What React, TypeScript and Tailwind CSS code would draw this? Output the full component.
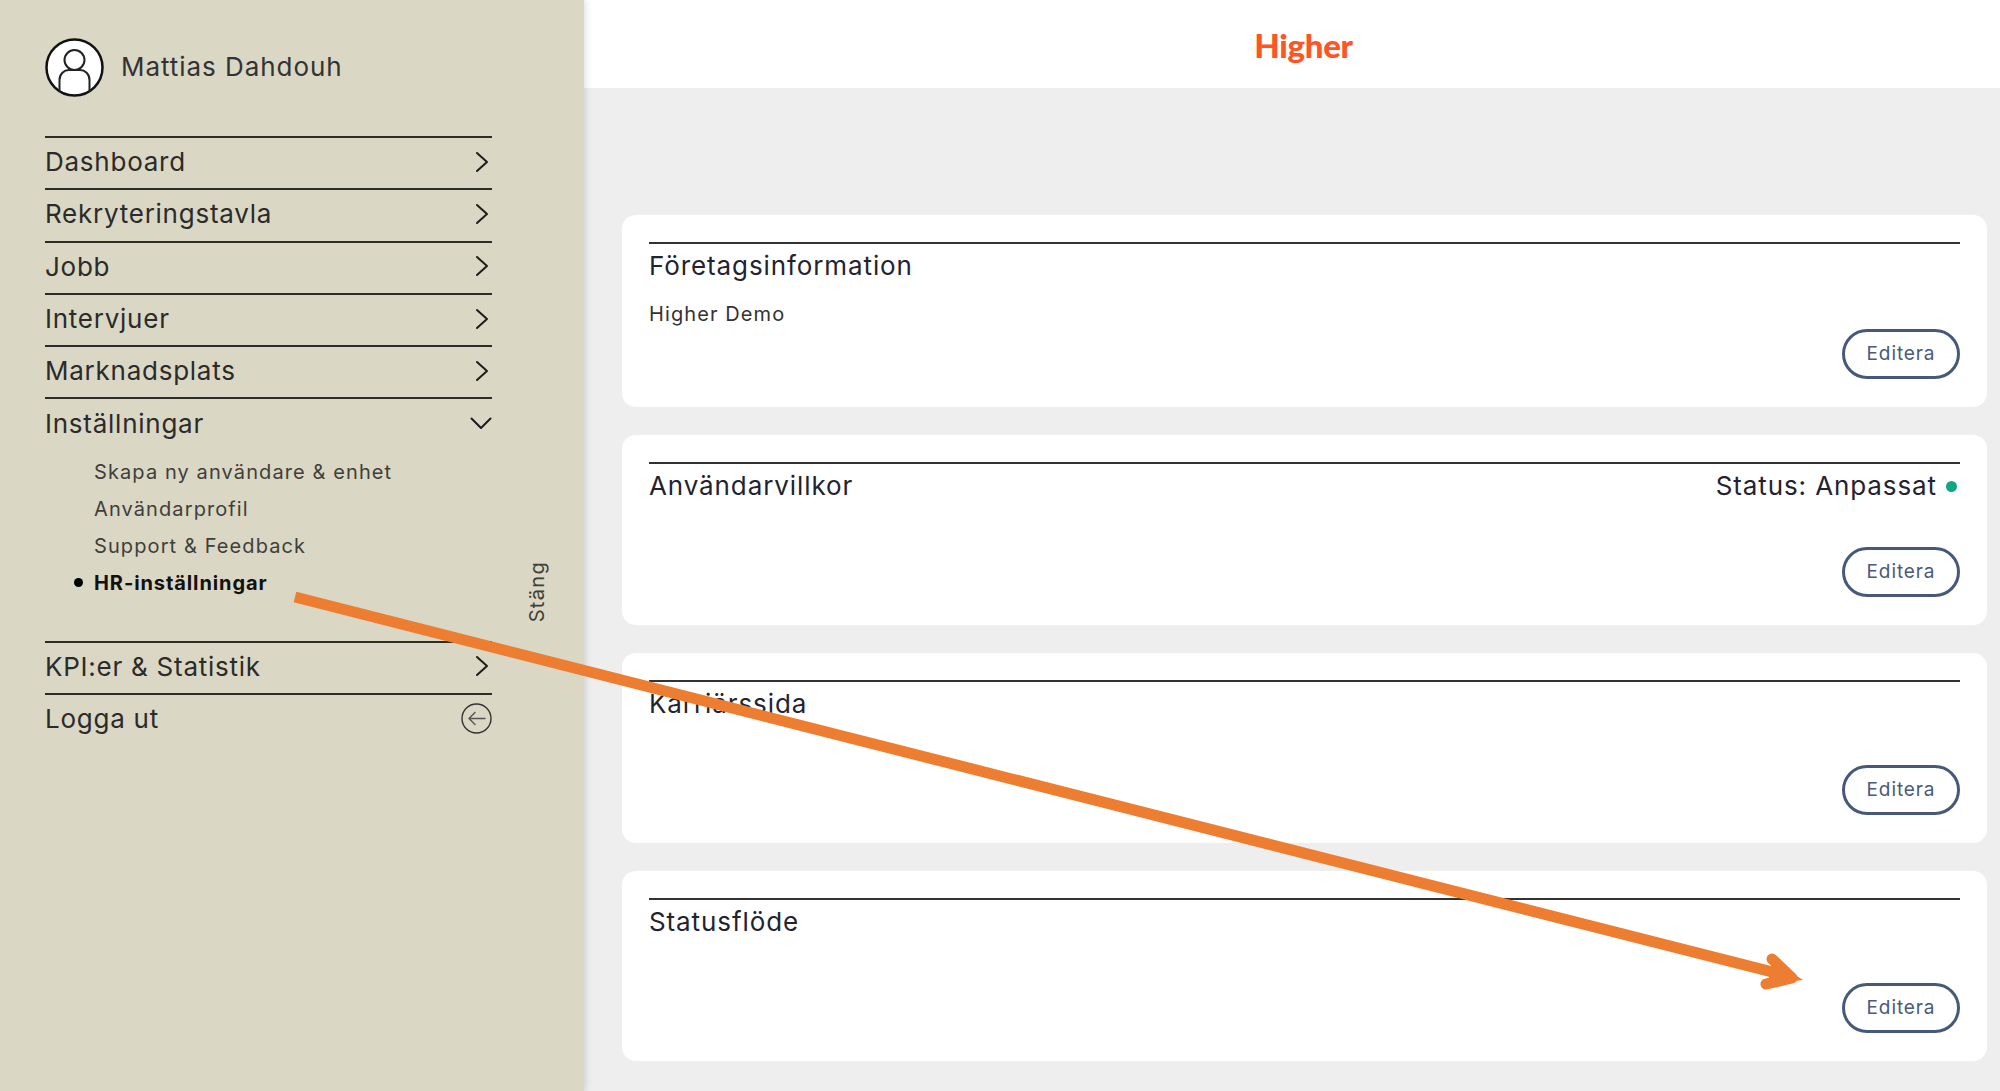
const menuTop = ['Dashboard', 'Rekryteringstavla', 'Jobb', 'Intervjuer', 'Marknadsplats'];
const subItems = ['Skapa ny användare & enhet', 'Användarprofil', 'Support & Feedback'];

function ChevronRight() {
  return (
    <svg width="14" height="22" viewBox="0 0 14 22" fill="none" className="mr-[3px]">
      <polyline points="2,2 12,11 2,20" stroke="#1c1c1c" strokeWidth="2" strokeLinecap="round" strokeLinejoin="round" />
    </svg>
  );
}

function ChevronDown() {
  return (
    <svg width="22" height="13" viewBox="0 0 22 13" fill="none">
      <polyline points="1.5,1.5 11,11 20.5,1.5" stroke="#1c1c1c" strokeWidth="2" strokeLinecap="round" strokeLinejoin="round" />
    </svg>
  );
}

function Avatar() {
  return (
    <svg width="59" height="59" viewBox="0 0 59 59" fill="none" className="shrink-0">
      <circle cx="29.5" cy="29.5" r="28" fill="#fff" stroke="#111" strokeWidth="2.5" />
      <circle cx="29.5" cy="22" r="10" stroke="#222" strokeWidth="2" />
      <path d="M14.5 54 V42 C14.5 36 19 32 24 32 H35 C40 32 44.5 36 44.5 42 V54" stroke="#222" strokeWidth="2" />
    </svg>
  );
}

function LogoutIcon() {
  return (
    <svg width="31" height="31" viewBox="0 0 31 31" fill="none">
      <circle cx="15.5" cy="15.5" r="14.5" stroke="#333" strokeWidth="1.4" />
      <path d="M24 15.5 H8 M14 9.5 L8 15.5 L14 21.5" stroke="#555" strokeWidth="1.4" strokeLinecap="round" strokeLinejoin="round" />
    </svg>
  );
}

function NavRow({ label, icon }: { label: string; icon: React.ReactNode }) {
  return (
    <div className="flex h-[52.3px] items-center justify-between border-t-2 border-[#2c2c28] pb-[3px] text-[26px] tracking-[0.75px] text-[#2b2b2b]">
      <span>{label}</span>
      {icon}
    </div>
  );
}

function Card({ title, children, right }: { title: string; children?: React.ReactNode; right?: React.ReactNode }) {
  return (
    <section className="flex h-[190px] flex-col rounded-[14px] bg-white px-[27px] pt-[27px] pb-[28px] first:h-[192px]">
      <div className="flex items-center justify-between border-t-2 border-[#333] pt-[4px] text-[26px] leading-[36px] tracking-[0.9px] text-[#1f2430]">
        <h2>{title}</h2>
        {right}
      </div>
      {children}
      <button className="mt-auto self-end h-[50px] w-[118px] rounded-full border-[3px] border-[#47597a] text-[19px] tracking-[0.9px] text-[#4a5a78]">
        Editera
      </button>
    </section>
  );
}

export default function App() {
  return (
    <div className="relative flex h-[1091px] w-[2000px] overflow-hidden bg-[#eeeeee] font-['Inter','Noto_Sans',sans-serif]">
      <aside className="z-10 flex h-full w-[584px] shrink-0 bg-[#dad7c4] pl-[45px] shadow-[2px_0_6px_rgba(0,0,0,0.12)]">
        <div className="w-[447px]">
          <div className="flex h-[136px] items-start gap-[17px] pt-[38px]">
            <Avatar />
            <span className="mt-[11px] text-[26px] leading-[36px] tracking-[0.95px] text-[#333]">Mattias Dahdouh</span>
          </div>
          <nav>
            {menuTop.map((item) => (
              <NavRow key={item} label={item} icon={<ChevronRight />} />
            ))}
            <NavRow label="Inställningar" icon={<ChevronDown />} />
            <ul className="h-[191px] pt-[4px] pl-[49px] text-[20px] tracking-[1.1px] text-[#3f3f3a]">
              {subItems.map((item) => (
                <li key={item} className="flex h-[36.8px] items-center">{item}</li>
              ))}
              <li className="relative flex h-[36.8px] items-center font-bold tracking-[0.9px] text-[#111]">
                <span className="absolute left-[-20px] size-[9px] rounded-full bg-black" />
                HR-inställningar
              </li>
            </ul>
            <NavRow label="KPI:er & Statistik" icon={<ChevronRight />} />
            <NavRow label="Logga ut" icon={<LogoutIcon />} />
          </nav>
        </div>
        <div className="ml-[33px] pt-[561px]">
          <span className="block rotate-180 text-[20px] leading-[24px] tracking-[1.3px] text-[#3f3f3a] [writing-mode:vertical-rl]">Stäng</span>
        </div>
      </aside>

      <div className="flex min-w-0 flex-1 flex-col">
        <header className="flex h-[88px] items-center justify-center bg-white pt-[3px] pl-[23px]">
          <span className="font-['Lato',sans-serif] text-[33px] font-black tracking-[-0.3px] text-[#ff5424]">Higher</span>
        </header>
        <main className="flex flex-col gap-[28px] pt-[127px] pr-[13px] pl-[38px]">
          <Card title="Företagsinformation">
            <p className="mt-[15px] text-[20px] tracking-[1.1px] text-[#33332f]">Higher Demo</p>
          </Card>
          <Card
            title="Användarvillkor"
            right={
              <span className="flex items-center gap-[9px] pr-[3px]">
                Status: Anpassat
                <span className="size-[11px] rounded-full bg-[#12a586]" />
              </span>
            }
          />
          <Card title="Karriärssida" />
          <Card title="Statusflöde" />
        </main>
      </div>

      {/* annotation arrow drawn on top of the screenshot */}
      <svg width="2000" height="1091" viewBox="0 0 2000 1091" fill="none" className="pointer-events-none absolute inset-0 z-20">
        <line x1="295" y1="597" x2="1780" y2="974" stroke="#ed7d31" strokeWidth="11" />
        <path d="M1772 959 L1792 978 L1766 984" stroke="#ed7d31" strokeWidth="11" strokeLinecap="round" strokeLinejoin="round" />
        <path d="M1772 960 L1803 980 L1768 984 Z" fill="#ed7d31" />
      </svg>
    </div>
  );
}
